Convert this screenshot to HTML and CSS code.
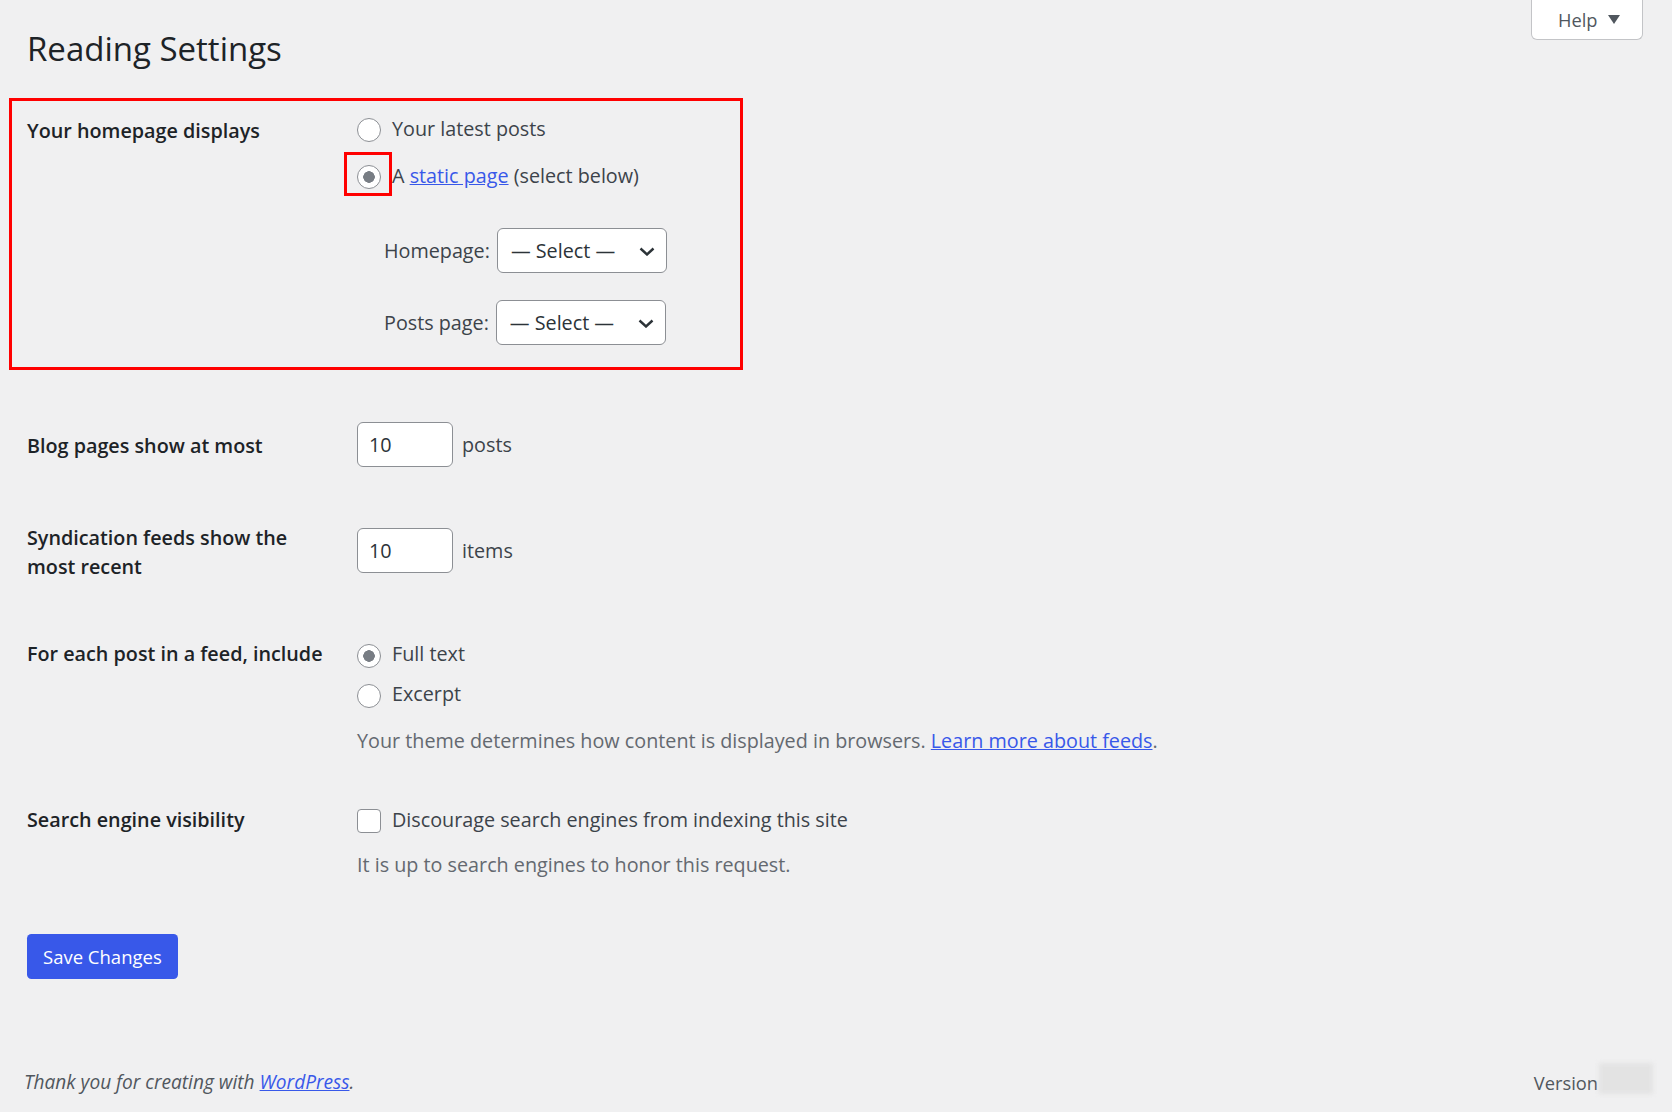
FILE: index.html
```html
<!DOCTYPE html>
<html lang="en">

<head>
  <meta charset="UTF-8">
  <meta name="viewport" content="width=device-width, initial-scale=1.0">
  <title>Reading Settings</title>
  <link rel="stylesheet" href="styles.css">
</head>

<body>
  <div class="wrap">
    <div class="page-head">
      <h1>Reading Settings</h1>
      <button class="help-tab" type="button">Help
        <svg width="12" height="10" viewBox="0 0 12 10"><polygon points="0,0 12,0 6,9" fill="#50575e" /></svg>
      </button>
    </div>

    <form class="settings">
      <div class="form-row row-front">
        <div class="row-label">Your homepage displays</div>
        <div class="row-field">
          <ul class="choice-list">
            <li><label class="choice"><input type="radio" name="show_on_front"><span>Your latest posts</span></label></li>
            <li class="marked">
              <label class="choice"><input type="radio" name="show_on_front" checked><span>A <a href="#">static page</a> (select below)</span></label>
              <span class="mark mark-small"></span>
            </li>
          </ul>
          <ul class="page-picks">
            <li>
              <label for="page_on_front">Homepage:</label>
              <span class="select-wrap">
                <select id="page_on_front"><option>— Select —</option></select>
                <svg class="chevron" width="16" height="9" viewBox="0 0 16 9"><path d="M1.5 1.5 L8 7.5 L14.5 1.5" fill="none" stroke="#2c3338" stroke-width="2.4" /></svg>
              </span>
            </li>
            <li>
              <label for="page_for_posts">Posts page:</label>
              <span class="select-wrap">
                <select id="page_for_posts"><option>— Select —</option></select>
                <svg class="chevron" width="16" height="9" viewBox="0 0 16 9"><path d="M1.5 1.5 L8 7.5 L14.5 1.5" fill="none" stroke="#2c3338" stroke-width="2.4" /></svg>
              </span>
            </li>
          </ul>
        </div>
        <span class="mark mark-large"></span>
      </div>

      <div class="form-row row-posts">
        <div class="row-label">Blog pages show at most</div>
        <div class="row-field inline-field">
          <input class="small-text" type="text" value="10"> posts
        </div>
      </div>

      <div class="form-row row-feeds">
        <div class="row-label">Syndication feeds show the most recent</div>
        <div class="row-field inline-field">
          <input class="small-text" type="text" value="10"> items
        </div>
      </div>

      <div class="form-row row-feed-use">
        <div class="row-label">For each post in a feed, include</div>
        <div class="row-field">
          <div class="choice-stack">
            <label class="choice"><input type="radio" name="rss_use_excerpt" checked><span>Full text</span></label>
            <label class="choice"><input type="radio" name="rss_use_excerpt"><span>Excerpt</span></label>
          </div>
          <p class="description">Your theme determines how content is displayed in browsers. <a href="#">Learn more about feeds</a>.</p>
        </div>
      </div>

      <div class="form-row row-privacy">
        <div class="row-label">Search engine visibility</div>
        <div class="row-field">
          <label class="choice"><input type="checkbox"><span>Discourage search engines from indexing this site</span></label>
          <p class="description note">It is up to search engines to honor this request.</p>
        </div>
      </div>

      <p class="submit"><button class="button-primary" type="button">Save Changes</button></p>
    </form>
  </div>

  <div class="footer">
    <p class="footer-thanks">Thank you for creating with <a href="#">WordPress</a>.</p>
    <p class="footer-version">Version <span class="blurred"></span></p>
  </div>
</body>

</html>
```

FILE: styles.css
```css
body {
  margin: 0;
  background-color: #f0f0f1;
  font-family: "Open Sans", "Noto Sans", sans-serif;
  font-size: 19.75px;
  color: #3c434a;
}

a {
  color: #3858e9;
}

.wrap {
  padding: 0 29px 0 27px;
}

.page-head {
  display: flex;
  justify-content: space-between;
  align-items: flex-start;
}

h1 {
  margin: 27px 0 0;
  font-size: 33px;
  font-weight: 400;
  line-height: 44px;
  color: #1d2327;
}

.help-tab {
  display: flex;
  align-items: center;
  gap: 10px;
  width: 112px;
  height: 40px;
  padding: 0 0 0 26px;
  background: #fff;
  border: 1px solid #c3c4c7;
  border-top: 0;
  border-radius: 0 0 6px 6px;
  font-family: inherit;
  font-size: 18.3px;
  color: #50575e;
}

/* rows */
.form-row {
  position: relative;
  display: grid;
  grid-template-columns: 330px 1fr;
  align-items: start;
}

.row-label {
  padding-right: 25px;
  font-weight: 600;
  line-height: 29.4px;
  color: #1d2327;
}

.row-field {
  line-height: 29.4px;
}

.row-front .row-label { padding-top: 44.8px; }
.row-front .row-field { padding-top: 36px; }
.row-posts .row-label { padding-top: 86.3px; }
.row-posts .row-field { padding-top: 76.85px; }
.row-feeds .row-label { padding-top: 56.2px; }
.row-feeds .row-field { padding-top: 61px; }
.row-feed-use .row-label,
.row-feed-use .row-field { padding-top: 57.5px; }
.row-privacy .row-label,
.row-privacy .row-field { padding-top: 49.9px; }

/* radios and checkboxes */
.choice-list {
  list-style: none;
  margin: 0;
  padding: 0;
}

.choice-list li {
  position: relative;
  padding: 7px 0 10.3px;
}

.choice-stack {
  display: flex;
  flex-direction: column;
  gap: 10.6px;
}

.choice {
  display: flex;
  align-items: center;
  gap: 11px;
}

.choice input {
  appearance: none;
  flex-shrink: 0;
  width: 24px;
  height: 24px;
  margin: 3px 0 0;
  border: 1px solid #8c8f94;
  background: #fff;
}

.choice input[type="radio"] {
  border-radius: 50%;
}

.choice input[type="radio"]:checked {
  background: radial-gradient(circle, #787d84 0 5.5px, #fff 6px);
}

.choice input[type="checkbox"] {
  border-radius: 4px;
}

/* page selects */
.page-picks {
  display: flex;
  flex-direction: column;
  gap: 27px;
  list-style: none;
  margin: 27.6px 0 0 27px;
  padding: 0;
}

.page-picks li {
  display: flex;
  align-items: center;
  gap: 7px;
  height: 45px;
}

.select-wrap {
  position: relative;
  display: inline-block;
}

.select-wrap select {
  appearance: none;
  display: block;
  width: 170px;
  height: 45px;
  padding: 0 36px 0 13px;
  border: 1px solid #8c8f94;
  border-radius: 6px;
  background: #fff;
  font-family: inherit;
  font-size: 19.75px;
  color: #2c3338;
}

.chevron {
  position: absolute;
  right: 12px;
  top: calc(50% - 3.5px);
  pointer-events: none;
}

/* number boxes */
.inline-field {
  display: flex;
  align-items: center;
  gap: 9px;
}

.small-text {
  box-sizing: border-box;
  width: 96px;
  height: 45px;
  padding: 0 11px;
  border: 1px solid #8c8f94;
  border-radius: 6px;
  background: #fff;
  font-family: inherit;
  font-size: 19.75px;
  color: #2c3338;
}

.description {
  margin: 17.2px 0 0;
  color: #646970;
}

.note {
  margin-top: 15.8px;
}

/* screenshot highlight boxes */
.mark {
  position: absolute;
  box-sizing: border-box;
  border: 3px solid #f00;
  pointer-events: none;
}

.mark-large {
  left: -18.5px;
  top: 27px;
  width: 734.5px;
  height: 272px;
}

.mark-small {
  left: -13px;
  top: -1.7px;
  width: 48px;
  height: 44px;
}

/* submit */
.submit {
  margin: 53.95px 0 0;
}

.button-primary {
  height: 45px;
  padding: 0 16px;
  border: 0;
  border-radius: 4.5px;
  background: #3858e9;
  color: #fff;
  font-family: inherit;
  font-size: 18.5px;
}

/* footer */
.footer {
  display: flex;
  justify-content: space-between;
  align-items: center;
  margin-top: 89.7px;
  padding: 0 19px 0 24px;
  font-size: 18.3px;
  line-height: 29.4px;
  color: #50575e;
}

.footer p {
  margin: 0;
}

.footer-thanks {
  font-size: 19.1px;
  font-style: italic;
}

.footer-version {
  display: flex;
  align-items: center;
}

.blurred {
  display: inline-block;
  width: 54px;
  height: 31px;
  margin-top: -10px;
  margin-left: 1px;
  background: #e3e3e3;
  filter: blur(2px);
}
```
